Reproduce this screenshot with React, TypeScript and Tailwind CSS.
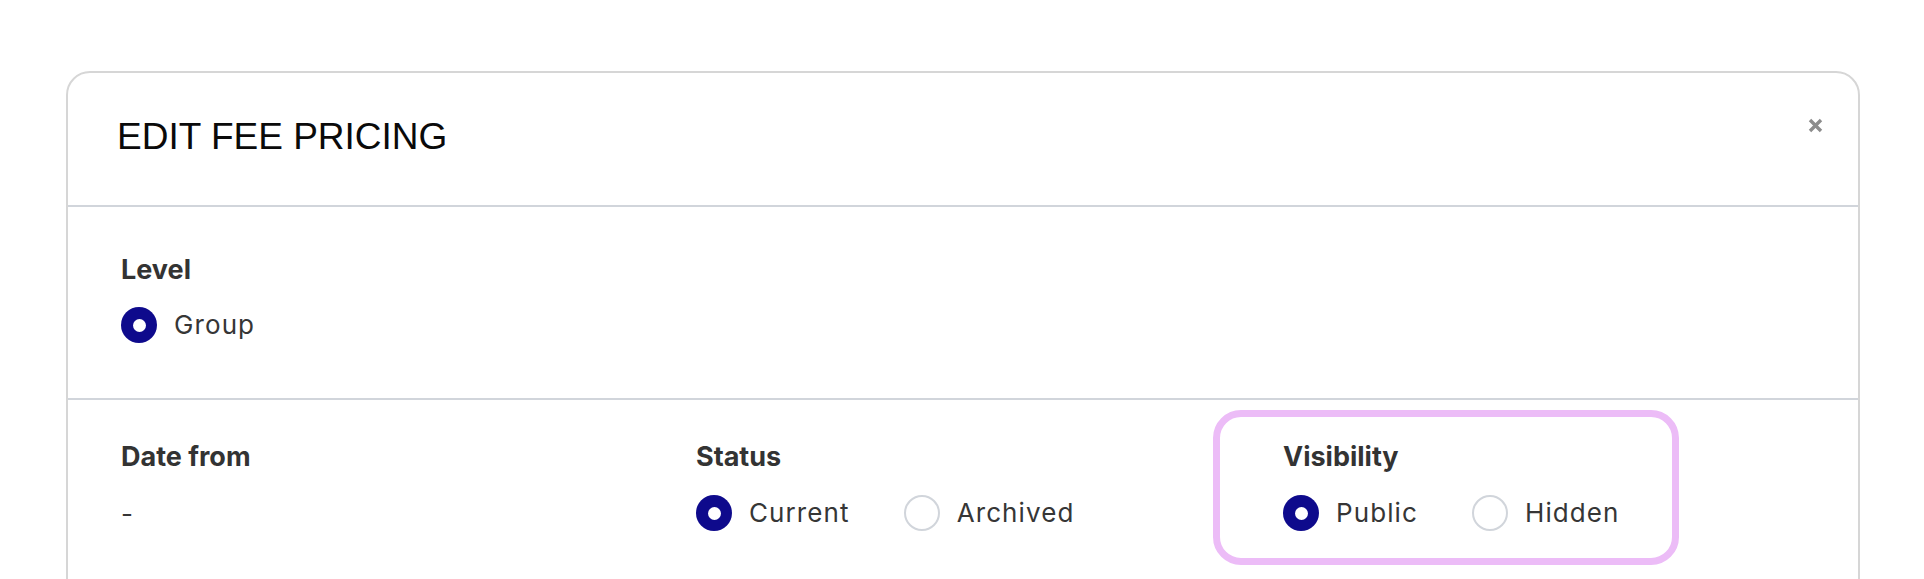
import React from "react";

function Radio({ checked }: { checked: boolean }) {
  return checked ? (
    <span className="flex h-[36px] w-[36px] shrink-0 items-center justify-center rounded-full bg-[#0e0a8c]">
      <span className="h-[13px] w-[13px] rounded-full bg-white" />
    </span>
  ) : (
    <span className="h-[36px] w-[36px] shrink-0 rounded-full border-2 border-[#d1d5db] bg-white" />
  );
}

function Option({ label, checked }: { label: string; checked: boolean }) {
  return (
    <div className="flex h-[36px] items-center gap-[17px]">
      <Radio checked={checked} />
      <span className="text-[26px] leading-[36px] tracking-[1.1px] text-[#363636]">{label}</span>
    </div>
  );
}

function Label({ children }: { children: React.ReactNode }) {
  return (
    <div className="text-[27px] font-bold leading-[36px] text-[#333333]">{children}</div>
  );
}

export default function App() {
  return (
    <div className="min-h-[579px] w-full overflow-hidden bg-white" style={{ fontFamily: "Inter, 'Noto Sans', sans-serif" }}>
      <div className="ml-[66px] mt-[71px] w-[1794px] rounded-[24px] border-2 border-[#d6d6d6] bg-white">
        <div className="relative border-b-2 border-[#d1d5db] pb-[46px] pl-[49px] pt-[42px]">
          <h1
            className="text-[37px] leading-[44px] text-[#0a0a0a]"
            style={{ fontFamily: "'Liberation Sans', Arial, sans-serif" }}
          >
            EDIT FEE PRICING
          </h1>
          <button className="absolute right-[35px] top-[45px] text-[#8c8c8c]">
            <svg width="15" height="15" viewBox="0 0 15 15" fill="none">
              <path d="M2 2L13 13M13 2L2 13" stroke="currentColor" strokeWidth="3.4" />
            </svg>
          </button>
        </div>
        <div className="border-b-2 border-[#d1d5db] pb-[55px] pl-[53px] pt-[45px]">
          <Label>Level</Label>
          <div className="mt-[19px]">
            <Option label="Group" checked />
          </div>
        </div>
        <div className="flex items-start pb-[60px] pl-[53px] pt-[10px]">
          <div className="w-[575px] pt-[29px]">
            <Label>Date from</Label>
            <div className="mt-[20px] flex h-[36px] items-center text-[26px] text-[#363636]">-</div>
          </div>
          <div className="w-[517px] pt-[29px]">
            <Label>Status</Label>
            <div className="mt-[20px] flex gap-[54px]">
              <Option label="Current" checked />
              <Option label="Archived" checked={false} />
            </div>
          </div>
          <div className="w-[466px] rounded-[28px] border-[7px] border-[#ecbcf7] pb-[27px] pl-[63px] pt-[22px]">
            <Label>Visibility</Label>
            <div className="mt-[20px] flex gap-[54px]">
              <Option label="Public" checked />
              <Option label="Hidden" checked={false} />
            </div>
          </div>
        </div>
      </div>
    </div>
  );
}
